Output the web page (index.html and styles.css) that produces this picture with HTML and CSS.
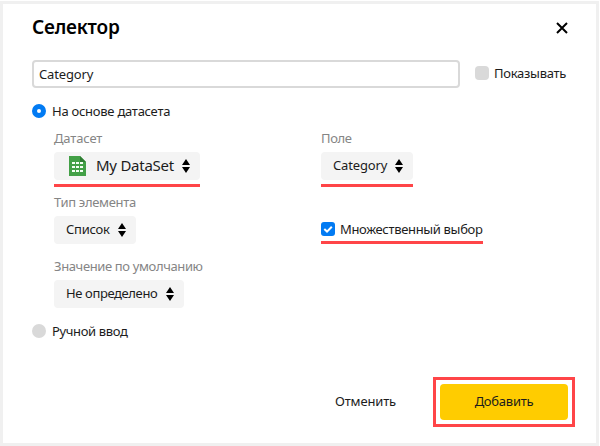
FILE: index.html
```html
<!DOCTYPE html>
<html lang="ru">
<head>
<meta charset="utf-8">
<title>Селектор</title>
<link rel="stylesheet" href="styles.css">
</head>
<body>
<svg width="0" height="0" class="defs">
  <symbol id="arrows" viewBox="0 0 8 14"><path d="M4 0 8 6H0zM0 8h8l-4 6z"/></symbol>
</svg>
<main class="dialog">
  <header class="header">
    <h1 class="title">Селектор</h1>
    <svg class="close" viewBox="0 0 12 12"><path d="M1 1l10 10M11 1 1 11"/></svg>
  </header>
  <div class="name-row">
    <div class="input"><span class="t-name">Category</span></div>
    <span class="box box-show"></span>
    <span class="t-show">Показывать</span>
  </div>
  <div class="option"><span class="radio radio-on"></span><span class="t-based">На основе датасета</span></div>
  <div class="grid">
    <div class="field">
      <div class="label"><span class="t-dataset">Датасет</span></div>
      <div class="select select-dataset">
        <svg class="sheet" viewBox="0 0 17 20"><path fill="#43a047" d="M0 0h11l6 6v14H0z"/><path fill="#2e7d32" d="M11 0l6 6h-6z"/><path fill="#f4fff4" d="M3 6h3v2H3zM7 6h3v2H7zM11 6h3v2h-3zM3 10h3v2H3zM7 10h3v2H7zM11 10h3v2h-3zM3 14h3v2H3zM7 14h3v2H7zM11 14h3v2h-3z"/></svg>
        <span class="t-my">My DataSet</span>
        <svg class="arrows"><use href="#arrows"/></svg>
      </div>
      <div class="underline"></div>
    </div>
    <div class="field field-category">
      <div class="label"><span class="t-field">Поле</span></div>
      <div class="select select-category"><span class="t-category">Category</span><svg class="arrows"><use href="#arrows"/></svg></div>
      <div class="underline"></div>
    </div>
    <div class="field">
      <div class="label"><span class="t-type">Тип элемента</span></div>
      <div class="select select-type"><span class="t-list">Список</span><svg class="arrows"><use href="#arrows"/></svg></div>
    </div>
    <div class="field field-multi">
      <div class="multi">
        <span class="box box-on"><svg viewBox="0 0 14 14"><path d="M3.3 7.1 6 9.6 10.8 4.7"/></svg></span>
        <span class="t-multi">Множественный выбор</span>
      </div>
      <div class="underline"></div>
    </div>
    <div class="field">
      <div class="label"><span class="t-default">Значение по умолчанию</span></div>
      <div class="select select-default"><span class="t-undef">Не определено</span><svg class="arrows"><use href="#arrows"/></svg></div>
    </div>
  </div>
  <div class="option"><span class="radio"></span><span class="t-manual">Ручной ввод</span></div>
  <footer class="footer">
    <span class="t-cancel">Отменить</span>
    <div class="highlight"><div class="add"><span class="t-add">Добавить</span></div></div>
  </footer>
</main>
</body>
</html>
```
FILE: styles.css
```css
* { box-sizing: border-box; }
body {
  margin: 0;
  padding: 1px 1px 0 0;
  height: 446px;
  overflow: hidden;
  background: #fff;
  color: #1c1c1c;
  font: 13px/20px "Noto Sans", "Open Sans", sans-serif;
  white-space: nowrap;
}
.defs { display: block; position: absolute; }
svg { display: block; flex: none; }
.dialog {
  width: 599px;
  height: 445px;
  padding: 11px 18px 0 29px;
  border: 3px solid #f0f0f0;
}
.header { display: flex; justify-content: space-between; height: 45px; padding-right: 10px; }
.title { margin: 0; font-size: 19px; line-height: 25px; font-weight: 600; letter-spacing: -0.2px; color: #000; }
.close { width: 12px; height: 12px; margin-top: 7px; fill: none; stroke: #000; stroke-width: 2; }
.name-row { display: flex; align-items: center; height: 28px; }
.input {
  display: flex;
  align-items: center;
  width: 428px;
  height: 28px;
  margin-right: 15px;
  padding-left: 5px;
  border: 2px solid #d9d9d9;
  border-radius: 4px;
}
.box { width: 14px; height: 14px; margin-right: 5px; border-radius: 4px; background: #d9d9d9; flex: none; }
.box-show { margin-bottom: 2px; }
.box-on { background: #027bf3; border-radius: 3px; }
.box-on svg { width: 14px; height: 14px; fill: none; stroke: #fff; stroke-width: 2; }
.option { display: flex; align-items: center; height: 14px; margin-top: 16px; }
.radio { width: 14px; height: 14px; margin-right: 6px; border-radius: 50%; background: #d9d9d9; }
.radio-on { border: 5px solid #027bf3; background: #fff; }
.grid {
  display: grid;
  grid-template-columns: 267px 1fr;
  grid-template-rows: 64px 64px 52px;
  padding: 10px 0 0 22px;
}
.field { display: flex; flex-direction: column; align-items: flex-start; }
.label { height: 24px; color: #858585; }
.select {
  display: flex;
  align-items: center;
  height: 28px;
  padding: 0 10px 0 12px;
  border-radius: 4px;
  background: #f4f4f4;
}
.select span { padding-bottom: 2px; }
.arrows { width: 8px; height: 14px; margin-left: auto; fill: #000; }
.select-dataset { width: 146px; padding-left: 15px; }
.select-dataset .t-my { margin-left: 10px; font-size: 15px; }
.select-category { width: 92px; }
.select-type { width: 82px; }
.select-default { width: 130px; }
.sheet { width: 17px; height: 20px; }
.underline { width: 146px; height: 3px; margin-top: 4px; background: #ff4548; }
.field-category .underline { width: 92px; }
.multi { display: flex; align-items: center; height: 14px; margin-top: 30px; }
.field-multi .underline { width: 162px; margin-top: 5px; }
.footer { display: flex; align-items: center; justify-content: flex-end; margin-top: 39px; padding-right: 3px; }
.highlight { width: 142px; height: 50px; margin-left: 37px; padding: 4px; border: 3px solid #ff4548; }
.add {
  display: flex;
  align-items: center;
  justify-content: center;
  width: 128px;
  height: 36px;
  border-radius: 4px;
  background: #fc0;
}
.t-name, .t-category { letter-spacing: -0.15px; }
.t-show { padding-bottom: 2px; letter-spacing: -0.28px; }
.t-based { letter-spacing: -0.26px; }
.t-dataset { letter-spacing: -0.15px; }
.t-my { letter-spacing: -0.25px; }
.t-field { letter-spacing: -0.4px; }
.t-type { letter-spacing: -0.33px; }
.t-list { letter-spacing: -0.25px; }
.t-multi { letter-spacing: -0.33px; }
.t-default { letter-spacing: -0.37px; }
.t-undef { letter-spacing: -0.38px; }
.t-manual { letter-spacing: -0.35px; }
.t-cancel { letter-spacing: -0.15px; }
.t-add { letter-spacing: -0.25px; }
.t-cancel, .t-add { padding-bottom: 2px; }
```
